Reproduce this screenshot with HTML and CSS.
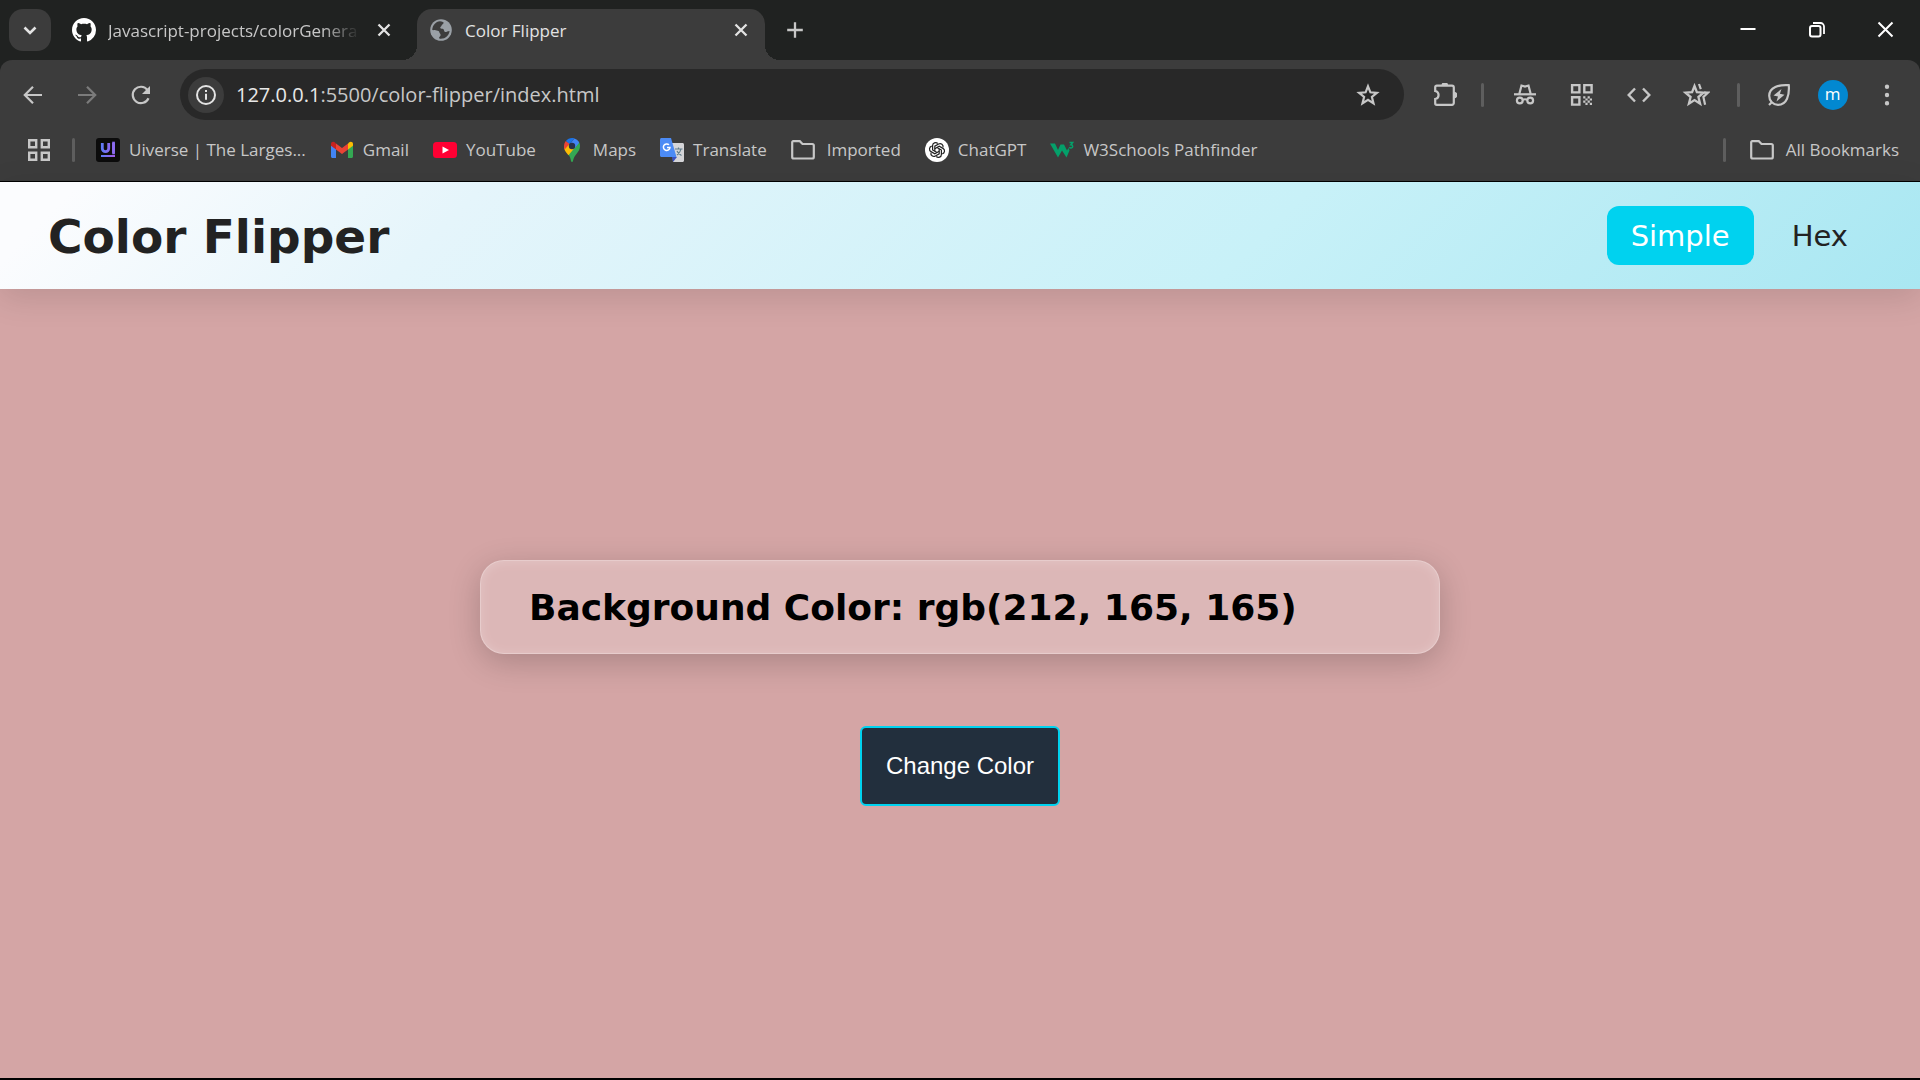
FILE: index.html
```html
<!DOCTYPE html>
<html lang="en">
<head>
<meta charset="utf-8">
<meta name="viewport" content="width=device-width, initial-scale=1">
<title>Color Flipper</title>
<link rel="stylesheet" href="styles.css">
</head>
<body>
<svg class="defs" aria-hidden="true">
  <symbol id="close" viewBox="0 0 24 24"><path d="M6.500 6.500l11 11M17.500 6.500l-11 11" fill="none" stroke="currentColor" stroke-width="2.300"/></symbol>
  <symbol id="folder" viewBox="0 0 24 24"><path d="M1.200 4.200V19a1.500 1.500 0 0 0 1.500 1.500H21.300a1.500 1.500 0 0 0 1.500-1.500V7.500A1.500 1.500 0 0 0 21.300 6H11.500L8.800 3.200H2.200a1 1 0 0 0-1 1z" fill="none" stroke="currentColor" stroke-width="2.200"/></symbol>
</svg>
<div class="browser">
  <div class="tabstrip">
    <button class="tab-search" aria-label="Search tabs"><svg class="icon" viewBox="0 0 24 24"><path d="M6.500 9.500l5.500 5.500 5.500-5.500" fill="none" stroke="currentColor" stroke-width="2.600"/></svg></button>
    <div class="tab">
      <svg class="icon white" viewBox="0 0 16 16"><path fill="currentColor" d="M8 0C3.580 0 0 3.580 0 8c0 3.540 2.290 6.530 5.470 7.590.4.070.55-.17.55-.38 0-.19-.01-.82-.01-1.490-2.010.37-2.530-.49-2.690-.94-.09-.23-.48-.94-.82-1.130-.28-.15-.68-.52-.01-.53.63-.01 1.080.58 1.230.82.72 1.210 1.870.87 2.330.66.070-.52.28-.87.51-1.070-1.780-.2-3.640-.89-3.640-3.950 0-.87.31-1.590.82-2.150-.08-.2-.36-1.020.08-2.120 0 0 .67-.21 2.200.82.64-.18 1.320-.27 2-.27s1.360.09 2 .27c1.530-1.040 2.200-.82 2.200-.82.44 1.100.16 1.920.08 2.120.51.56.82 1.270.82 2.150 0 3.070-1.870 3.750-3.650 3.950.29.25.54.73.54 1.480 0 1.070-.01 1.930-.01 2.200 0 .21.15.46.55.38A8.010 8.010 0 0 0 16 8c0-4.420-3.580-8-8-8z"/></svg>
      <span class="tab-title faded">Javascript-projects/colorGenera</span>
      <button class="tab-close" aria-label="Close tab"><svg class="icon"><use href="#close"/></svg></button>
    </div>
    <div class="tab active">
      <svg class="icon globe" viewBox="0 0 24 24"><circle cx="12" cy="12" r="10.800" fill="#9aa0a6"/><path fill="#3c3c3c" d="M11 3.200c2 .2 3 .6 3.800 1.500-.4 1.300-1.800 1.500-2.200 2.800-.3 1.200-1.600 1.300-1.300 2.600.3 1 2.300.3 3.200 1.100.9.900.3 2.500 1.600 2.800 1.300.3 2.300-1 4.500-1.100-.5 3.600-2.900 6.800-6.800 7.700-1.500.3-3 .2-3.700-.4-.2-1.300 1.300-1.700 1.500-2.900.2-1.500-1.200-1.700-1.300-3.200-.1-1.300-1.200-1.600-2.500-1.700-1.600-.1-3.600.1-4.600-.6C3.600 7.200 6.600 3.500 11 3.200z"/></svg>
      <span class="tab-title">Color Flipper</span>
      <button class="tab-close" aria-label="Close tab"><svg class="icon"><use href="#close"/></svg></button>
    </div>
    <button class="new-tab" aria-label="New tab"><svg class="icon" viewBox="0 0 24 24"><path d="M12 4.200v15.600M4.200 12h15.600" fill="none" stroke="currentColor" stroke-width="2.300"/></svg></button>
    <div class="window-controls">
      <button aria-label="Minimize"><svg class="icon" viewBox="0 0 24 24"><path d="M4.500 11h15" stroke="currentColor" stroke-width="2"/></svg></button>
      <button aria-label="Restore"><svg class="icon" viewBox="0 0 24 24"><rect x="5" y="8" width="10.500" height="10.500" rx="2" fill="none" stroke="currentColor" stroke-width="2"/><path d="M8 5h7.500a3.500 3.500 0 0 1 3.500 3.500v7.500" fill="none" stroke="currentColor" stroke-width="1.800"/></svg></button>
      <button aria-label="Close"><svg class="icon" viewBox="0 0 24 24"><path d="M4.500 4.500l14 14M18.500 4.500l-14 14" stroke="currentColor" stroke-width="2"/></svg></button>
    </div>
  </div>

  <div class="toolbar">
    <div class="nav-buttons">
      <button aria-label="Back"><svg class="icon" viewBox="0 0 24 24"><path d="M21 12H4M12 3.800L3.800 12l8.200 8.200" fill="none" stroke="currentColor" stroke-width="2.200"/></svg></button>
      <button class="dim" aria-label="Forward" disabled><svg class="icon" viewBox="0 0 24 24"><path d="M3 12h17M12 3.800l8.200 8.200-8.200 8.200" fill="none" stroke="currentColor" stroke-width="2.200"/></svg></button>
      <button aria-label="Reload"><svg class="icon" viewBox="0 0 24 24"><path d="M19.500 15.200A8.200 8.200 0 1 1 18.500 7" fill="none" stroke="currentColor" stroke-width="2.200"/><path d="M21 3v8h-8z" fill="currentColor"/></svg></button>
    </div>
    <div class="omnibox">
      <button class="site-info" aria-label="View site information"><svg class="icon" viewBox="0 0 24 24"><circle cx="12" cy="12" r="9" fill="none" stroke="currentColor" stroke-width="2"/><path d="M12 10.800v6M12 7v2" stroke="currentColor" stroke-width="2"/></svg></button>
      <a class="url" href="#"><span class="host">127.0.0.1</span>:5500/color-flipper/index.html</a>
      <button class="star" aria-label="Bookmark this tab"><svg class="icon" viewBox="0 0 24 24"><path d="M12 3.300l2.400 6 6.500.5-5 4.200 1.600 6.400-5.500-3.500-5.500 3.500 1.600-6.400-5-4.200 6.500-.5z" fill="none" stroke="currentColor" stroke-width="2.200"/></svg></button>
    </div>
    <div class="actions">
      <button aria-label="Extensions"><svg class="icon" viewBox="0 0 24 24"><path d="M3.700 2.700H19a1.800 1.800 0 0 1 1.800 1.800V20a1.800 1.800 0 0 1-1.800 1.800H3.700A1.500 1.500 0 0 1 2.200 20.300V16c4.500-.8 4.500-7.200 0-8V4.200a1.500 1.500 0 0 1 1.500-1.500z" fill="none" stroke="currentColor" stroke-width="2.200"/><path d="M8.500 2.500a3.300 3.300 0 0 1 6.600 0zM21 8.700a3.300 3.300 0 0 1 0 6.600z" fill="currentColor"/></svg></button>
      <span class="divider"></span>
      <button aria-label="Incognito"><svg class="icon" viewBox="0 0 24 24"><path fill="currentColor" d="M1 10.200h22v2.200H1z"/><path d="M6.300 11L8.500 2.500l3.500 1 3.500-1L17.700 11" fill="none" stroke="currentColor" stroke-width="2.200"/><circle cx="6.800" cy="17.500" r="2.900" fill="none" stroke="currentColor" stroke-width="2.200"/><circle cx="17.200" cy="17.500" r="2.900" fill="none" stroke="currentColor" stroke-width="2.200"/><path d="M9.500 17q2.500-1.400 5 0" fill="none" stroke="currentColor" stroke-width="2"/></svg></button>
      <button aria-label="QR code"><svg class="icon" viewBox="0 0 24 24"><path d="M2.100 2.100h7.300v7.300H2.100zM14.300 2.100h7.300v7.300h-7.300zM2.100 14.300h7.300v7.300H2.100z" fill="none" stroke="currentColor" stroke-width="2.400"/><path fill="currentColor" d="M13.200 13.200h2.200v2.200h-2.200zM17.600 13.200h2.200v2.200h-2.200zM15.400 15.400h2.200v2.200h-2.200zM19.800 15.400H22v2.200h-2.200zM13.200 17.600h2.200v2.200h-2.200zM17.600 17.600h2.200v2.200h-2.200zM15.400 19.800h2.200V22h-2.200zM19.800 19.800H22V22h-2.200z"/></svg></button>
      <button aria-label="Developer tools"><svg class="icon" viewBox="0 0 24 24"><path d="M8 5.500L1.700 12 8 18.500M16 5.500l6.300 6.500-6.300 6.500" fill="none" stroke="currentColor" stroke-width="2.400"/></svg></button>
      <button aria-label="Bookmarks"><svg class="icon wide" viewBox="0 0 28 24"><path d="M12.500 3l2.400 6.200 6.600.5-5.100 4.300 1.700 6.600-5.600-3.600-5.600 3.600 1.700-6.600-5.100-4.300 6.600-.5z" fill="none" stroke="currentColor" stroke-width="2.300"/><path d="M17 1l1.800 5.200M22 9.700h4l-4.600 4.200 1.700 7.800" fill="none" stroke="currentColor" stroke-width="2.200"/></svg></button>
      <span class="divider second"></span>
      <button aria-label="Energy saver"><svg class="icon" viewBox="0 0 24 24"><path d="M21.800 2.200C12 1.500 2.200 4 2.200 12.800c0 5.200 4 9 8.800 9C20 21.800 22.500 12 21.800 2.200zM5.500 18.500l-3.500 3.500" fill="none" stroke="currentColor" stroke-width="2.200"/><path fill="currentColor" d="M14.500 6l-8 6.500 4.500 1-1.500 5 8-6.700-4.600-1z"/></svg></button>
      <button class="profile" aria-label="Profile"><span class="avatar">m</span></button>
      <button aria-label="Menu"><svg class="icon" viewBox="0 0 24 24"><path fill="currentColor" d="M12 1.500a2.200 2.200 0 1 1 0 4.400 2.200 2.200 0 0 1 0-4.400zm0 8.300a2.200 2.200 0 1 1 0 4.400 2.200 2.200 0 0 1 0-4.400zm0 8.300a2.200 2.200 0 1 1 0 4.400 2.200 2.200 0 0 1 0-4.400z"/></svg></button>
    </div>
  </div>

  <nav class="bookmarks" aria-label="Bookmarks">
    <button class="apps" aria-label="Apps"><svg class="icon" viewBox="0 0 24 24"><path d="M2.200 2.200h7v7h-7zM14.800 2.200h7v7h-7zM2.200 14.800h7v7h-7zM14.800 14.800h7v7h-7z" fill="none" stroke="currentColor" stroke-width="2.400"/></svg></button>
    <span class="divider"></span>
    <a href="#"><svg class="icon" viewBox="0 0 24 24"><defs><linearGradient id="ui" gradientUnits="userSpaceOnUse" x1="5" y1="0" x2="19" y2="0"><stop stop-color="#5b7cf7"/><stop offset="1" stop-color="#a65be8"/></linearGradient></defs><rect width="24" height="24" rx="3" fill="#0c0c0c"/><path d="M6.300 5v5.500a3.200 3.200 0 0 0 6.400 0V5M17.500 5v10" fill="none" stroke="url(#ui)" stroke-width="2.800"/><path d="M17.500 5h.1v10h-.1z" fill="none" stroke="#8a6cf0" stroke-width="2.600"/><path d="M5 17h14v2H5z" fill="url(#ui)"/></svg>Uiverse | The Larges...</a>
    <a href="#"><svg class="icon" viewBox="0 0 24 24"><path fill="#4285f4" d="M1 7v11.500C1 19.300 1.700 20 2.500 20H6V10.500z"/><path fill="#34a853" d="M18 20h3.500c.8 0 1.500-.7 1.500-1.500V7l-5 3.500z"/><path fill="#fbbc04" d="M18 5.500v6l5-3.700V6c0-2.200-2.300-3-4-1.600z"/><path fill="#ea4335" d="M6 11.500v-6l6 4.500 6-4.500v6L12 16z"/><path fill="#c5221f" d="M1 6v1.800l5 3.700v-6L5 4.400C3.300 3 1 3.800 1 6z"/></svg>Gmail</a>
    <a href="#"><svg class="icon" viewBox="0 0 24 24"><rect y="4" width="24" height="16" rx="3.500" fill="#ff0033"/><path fill="#fff" d="M9.500 8.500l6.500 3.500-6.500 3.500z"/></svg>YouTube</a>
    <a href="#"><svg class="icon" viewBox="0 0 24 24"><path fill="#34a853" d="M20 8c0 3-1.200 5-3 7.200-2.300 2.800-3.500 4.800-4 7.800-.2 1.300-1.800 1.300-2 0-.4-2.600-1.200-4.500-2.600-6.200L18.500 3.500C19.500 4.800 20 6.300 20 8z"/><path fill="#fbbc04" d="M4 8c0 3 1 5 2.600 7 .7.800 1.300 1.500 1.900 2.300L14.500 10 9 5z"/><path fill="#ea4335" d="M5.900 2.900C4.700 4.300 4 6 4 8c0 1.300.2 2.400.6 3.400L9.800 5.800z"/><path fill="#1a73e8" d="M14.500.4C11 -.6 8 .5 5.900 2.900L9.500 6z"/><path fill="#4285f4" d="M14.500.4L9.500 6.500l5.200 3.800 4.500-5.600C18.200 2.600 16.600 1 14.500.4z"/><circle cx="12" cy="8" r="3.200" fill="#28324a"/></svg>Maps</a>
    <a href="#"><svg class="icon" viewBox="0 0 24 24"><path fill="#d5d5d8" d="M12 5h10.500c.8 0 1.500.7 1.500 1.500v16c0 .8-.7 1.500-1.500 1.500H13z"/><path fill="#3a51c0" d="M12 19h5l-4 5z"/><path fill="#4c8bf5" d="M1.500 0H11l5.500 19h-15C.7 19 0 18.300 0 17.500v-16C0 .7.700 0 1.500 0z"/><path d="M9 6.800A3.300 3.300 0 1 0 10 9.500H7" fill="none" stroke="#fff" stroke-width="1.500"/><path d="M15 11h7.500M18.500 9.500V11M21 11c-.5 2.500-2 4.500-4 6M17 13c1 2 3 3.800 4.500 4.500" fill="none" stroke="#607d8b" stroke-width="1.200"/></svg>Translate</a>
    <a class="folder" href="#"><svg class="icon"><use href="#folder"/></svg>Imported</a>
    <a href="#"><svg class="icon" viewBox="0 0 24 24"><circle cx="12" cy="12" r="12" fill="#fff"/><g fill="none" stroke="#222" stroke-width="1.200"><path d="M9.800 13.300V8.200L13.600 6a3 3 0 0 1 4.400 3.400"/><path d="M9.800 13.300V8.200L13.600 6a3 3 0 0 1 4.400 3.400" transform="rotate(60 12 12)"/><path d="M9.800 13.300V8.200L13.600 6a3 3 0 0 1 4.400 3.400" transform="rotate(120 12 12)"/><path d="M9.800 13.300V8.200L13.600 6a3 3 0 0 1 4.400 3.400" transform="rotate(180 12 12)"/><path d="M9.800 13.300V8.200L13.600 6a3 3 0 0 1 4.400 3.400" transform="rotate(240 12 12)"/><path d="M9.800 13.300V8.200L13.600 6a3 3 0 0 1 4.400 3.400" transform="rotate(300 12 12)"/></g></svg>ChatGPT</a>
    <a href="#"><svg class="icon" viewBox="0 0 24 24"><path fill="#04a06a" d="M0 5.500h5l3 6.500 2.500-5.500h3.500l3 6 1.500-2.500 1 2.500L16.500 19.500l-4.500-7-4 7z"/><path d="M19.500 4.500h3.200l-1.800 2.200c2.200 0 2.500 3.300 0 3.300-.8 0-1.300-.3-1.600-.9" fill="none" stroke="#04a06a" stroke-width="1.500"/></svg>W3Schools Pathfinder</a>
    <span class="divider push"></span>
    <a class="folder" href="#"><svg class="icon"><use href="#folder"/></svg>All Bookmarks</a>
  </nav>
</div>

<div class="page">
  <header class="site-header">
    <h1>Color Flipper</h1>
    <nav class="site-nav">
      <a class="current" href="#">Simple</a>
      <a href="#">Hex</a>
    </nav>
  </header>
  <main>
    <h2 class="color-card">Background Color: rgb(212, 165, 165)</h2>
    <button class="change">Change Color</button>
  </main>
</div>
</body>
</html>
```
FILE: styles.css
```css
* { box-sizing: border-box; }

body {
  margin: 0;
  min-height: 100vh;
  display: flex;
  flex-direction: column;
  background: #000;
  font-family: "DejaVu Sans", sans-serif;
}

button {
  margin: 0;
  padding: 0;
  border: 0;
  background: none;
  color: inherit;
  font: inherit;
}

a { color: inherit; text-decoration: none; }

.defs { position: absolute; width: 0; height: 0; }

.icon { display: block; flex: none; width: 24px; height: 24px; }
.icon.wide { width: 28px; }
.white { color: #fff; }

/* Browser frame */
.browser {
  background: #202221;
  color: #c7c7c7;
  font-family: "Open Sans", "Noto Sans", sans-serif;
  font-size: 17px;
  border-bottom: 1px solid #000;
}

.tabstrip {
  display: flex;
  align-items: center;
  height: 60px;
  padding: 0 0 0 9px;
}

.tab-search {
  display: grid;
  place-items: center;
  width: 42px;
  height: 42px;
  border-radius: 14px;
  background: #3c3c3c;
  color: #e3e3e3;
}

.tab {
  display: flex;
  align-items: center;
  gap: 12px;
  width: 348px;
  height: 51px;
  padding: 0 12px;
  margin-left: 9px;
}

.tab-title {
  flex: 1;
  min-width: 0;
  overflow: hidden;
  white-space: nowrap;
  padding-top: 2px;
  line-height: 24px;
}

.faded {
  -webkit-mask-image: linear-gradient(to right, #000 85%, transparent);
  mask-image: linear-gradient(to right, #000 85%, transparent);
}

.tab-close { color: #e3e3e3; }

.tab.active {
  position: relative;
  align-self: flex-end;
  padding-bottom: 9px;
  border-radius: 15px 15px 0 0;
  background: #3c3c3c;
  color: #e3e3e3;
}

.tab.active::before,
.tab.active::after {
  content: "";
  position: absolute;
  bottom: 0;
  width: 15px;
  height: 15px;
}

.tab.active::before {
  right: 100%;
  background: radial-gradient(circle at 0 0, transparent 15px, #3c3c3c 15px);
}

.tab.active::after {
  left: 100%;
  background: radial-gradient(circle at 100% 0, transparent 15px, #3c3c3c 15px);
}

.new-tab { margin-left: 18px; }

.window-controls { display: flex; margin-left: auto; color: #fff; }
.window-controls button { display: grid; place-items: center; width: 69px; height: 60px; }

.toolbar {
  display: flex;
  align-items: center;
  height: 60px;
  padding: 9px 5px 0 6px;
  border-radius: 12px 12px 0 0;
  background: #3c3c3c;
}

.toolbar button { display: grid; place-items: center; }

.nav-buttons { display: flex; padding-right: 12px; }
.nav-buttons button { width: 54px; height: 51px; }
.nav-buttons .dim { color: #7b7b7b; }

.omnibox {
  display: flex;
  align-items: center;
  flex: 1;
  height: 51px;
  padding: 0 24px 0 8px;
  border-radius: 26px;
  background: #282828;
}

.toolbar .site-info {
  width: 36px;
  height: 36px;
  border-radius: 18px;
  background: #3c3c3c;
  color: #e3e3e3;
}

.url { flex: 1; padding-left: 12px; font-size: 20px; line-height: 27px; }
.host { color: #e8e8e8; }

.actions { display: flex; align-items: center; padding-left: 12px; }
.actions button { width: 57px; height: 51px; }
.actions .profile { width: 51px; }

.avatar {
  width: 30px;
  height: 30px;
  border-radius: 50%;
  background: #0288d1;
  color: #fff;
  font-size: 17px;
  line-height: 28px;
  text-align: center;
}

.divider { width: 3px; height: 24px; border-radius: 2px; background: #5e5e5e; }
.actions .divider { margin: 0 12px 0 8px; }
.actions .second { margin: 0 10px 0 13px; }

.bookmarks {
  display: flex;
  align-items: center;
  gap: 24px;
  height: 61px;
  padding: 0 21px 1px 27px;
  background: #3c3c3c;
  white-space: nowrap;
}

.bookmarks a { display: flex; align-items: center; gap: 9px; line-height: 24px; }
.bookmarks .folder { gap: 12px; }
.bookmarks .divider { margin: 0 -3px; }
.bookmarks .push { margin: 0 0 0 auto; }

/* Page */
.page {
  flex: 1;
  display: flex;
  flex-direction: column;
  margin-bottom: 2px;
  background: rgb(212, 165, 165);
}

.site-header {
  display: flex;
  align-items: center;
  justify-content: space-between;
  padding: 24px 48px;
  background: linear-gradient(135deg, #fbfcfe 4%, #e5f5fb 24%, #c8f1f8 65%, #a9e7f2);
  box-shadow: 0 8px 32px rgba(0, 0, 0, 0.12);
  color: #222;
}

h1 { margin: 0; padding-top: 2px; font-size: 47px; line-height: 56px; }

.site-nav { display: flex; gap: 14px; font-size: 29px; line-height: 35px; }
.site-nav a { padding: 13px 24px 11px; border-radius: 12px; }
.site-nav .current { background: #00d2ef; color: #fff; }

main {
  flex: 1;
  display: flex;
  flex-direction: column;
  align-items: center;
  justify-content: center;
  gap: 72px;
  padding-bottom: 2px;
}

.color-card {
  width: 50%;
  margin: 0;
  padding: 25px 48px 23px;
  border: 1px solid rgba(255, 255, 255, 0.3);
  border-radius: 24px;
  background: rgba(255, 255, 255, 0.2);
  box-shadow: 0 8px 32px rgba(0, 0, 0, 0.2), inset 0 1px 12px rgba(255, 255, 255, 0.2);
  color: #000;
  font-size: 36px;
  line-height: 44px;
}

.change {
  padding: 24px;
  border: 2px solid #00d2ef;
  border-radius: 6px;
  background: #222f3d;
  color: #fff;
  font-family: "Liberation Sans", Arial, sans-serif;
  font-size: 24px;
  line-height: 28px;
}
```
